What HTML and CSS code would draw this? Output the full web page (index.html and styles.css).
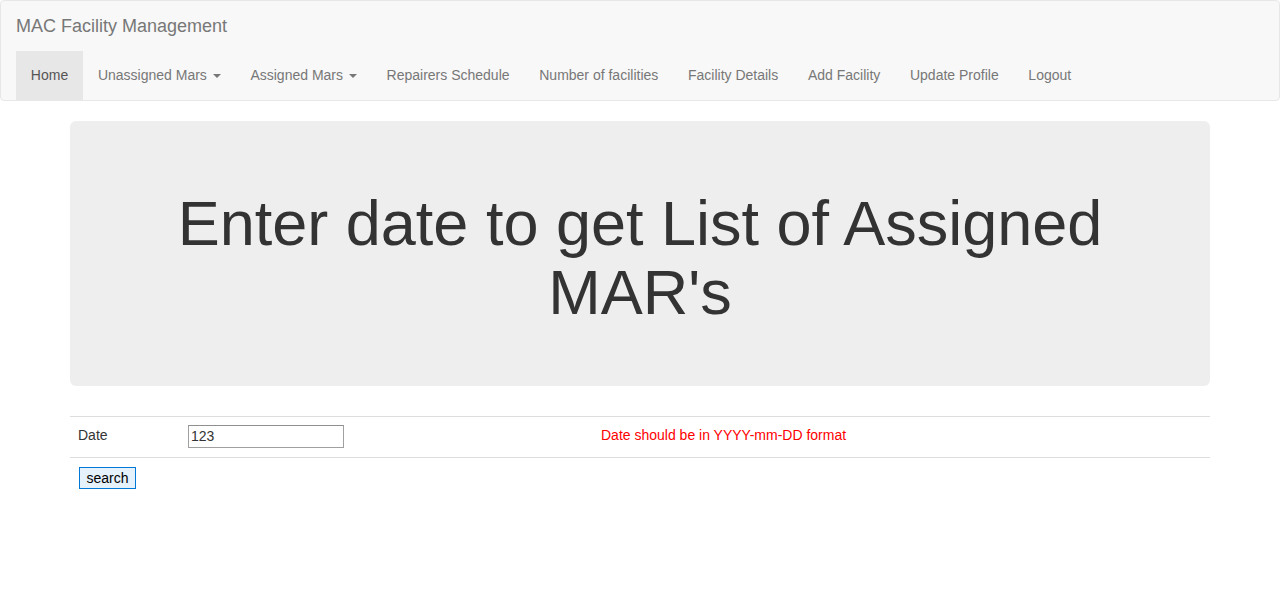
FILE: index.html
```html
<!DOCTYPE html>
<html>
<head>
<meta charset="utf-8">
<title>MAC Facility Management</title>
<link rel="stylesheet" href="styles.css">
</head>
<body>
<nav class="navbar">
  <div class="brand-row"><a class="brand" href="#">MAC Facility Management</a></div>
  <ul class="nav">
    <li class="active"><a href="#">Home</a></li>
    <li><a href="#">Unassigned Mars <span class="caret"></span></a></li>
    <li><a href="#">Assigned Mars <span class="caret"></span></a></li>
    <li><a href="#">Repairers Schedule</a></li>
    <li><a href="#">Number of facilities</a></li>
    <li><a href="#">Facility Details</a></li>
    <li><a href="#">Add Facility</a></li>
    <li><a href="#">Update Profile</a></li>
    <li><a href="#">Logout</a></li>
  </ul>
</nav>
<div class="container">
  <div class="jumbotron">
    <h1>Enter date to get List of Assigned MAR's</h1>
  </div>
  <form>
    <table class="table">
      <tr>
        <td class="c1">Date</td>
        <td class="c2"><input class="date-input" type="text" value="123"></td>
        <td class="c3"><span class="error">Date should be in YYYY-mm-DD format</span></td>
      </tr>
      <tr>
        <td colspan="3" class="btn-cell"><button class="search" type="button">search</button></td>
      </tr>
    </table>
  </form>
</div>
</body>
</html>
```
FILE: styles.css
```css
* { box-sizing: border-box; }
html, body { margin: 0; padding: 0; }
body {
  font-family: "Liberation Sans", Arial, Helvetica, sans-serif;
  font-size: 14px;
  line-height: 1.42857;
  color: #333;
  background: #fff;
}
a { text-decoration: none; }

.navbar {
  background: #f8f8f8;
  border: 1px solid #e7e7e7;
  border-radius: 4px;
  margin-bottom: 20px;
  padding: 0 15px;
}
.brand-row { height: 50px; }
.brand {
  display: inline-block;
  padding: 15px 0;
  font-size: 18px;
  line-height: 20px;
  color: #777;
}
.nav {
  list-style: none;
  margin: 0;
  padding: 0;
  display: flex;
}
.nav a {
  display: block;
  padding: 14px 14.85px 15px;
  line-height: 20px;
  color: #777;
}
.nav .active a {
  background: #e7e7e7;
  color: #555;
}
.caret {
  display: inline-block;
  width: 0;
  height: 0;
  margin-left: 2px;
  vertical-align: middle;
  border-top: 4px solid;
  border-right: 4px solid transparent;
  border-left: 4px solid transparent;
}

.container {
  width: 1170px;
  margin: 0 auto;
  padding: 0 15px;
}
.jumbotron {
  background: #eee;
  border-radius: 6px;
  padding: 48px 60px;
  margin-bottom: 30px;
}
.jumbotron h1 {
  margin: 20px 0 10px;
  font-size: 63px;
  font-weight: 500;
  line-height: 1.1;
  text-align: center;
  color: #333;
}
.table {
  width: 100%;
  border-collapse: collapse;
  border-spacing: 0;
  margin-bottom: 20px;
}
.table td {
  padding: 8px;
  border-top: 1px solid #ddd;
  vertical-align: top;
  line-height: 20px;
}
.table tr:first-child td { height: 41px; }
.c1 { width: 110px; }
.c2 { width: 413px; }
.date-input {
  font: inherit;
  font-size: 14px;
  width: 156px;
  height: 23px;
  padding: 1px 2px;
  margin: 0;
  border: 1px solid #a0a0a0;
  border-top-color: #8f8f8f;
  color: #333;
  vertical-align: top;
}
.error { color: #f00; }
.btn-cell { padding-top: 9px !important; }
.search {
  font: inherit;
  font-size: 14px;
  line-height: 18px;
  height: 22px;
  width: 57px;
  padding: 0;
  margin: 0 0 0 1px;
  background: #e5f1fb;
  border: 1px solid #0078d7;
  color: #000;
}
```
